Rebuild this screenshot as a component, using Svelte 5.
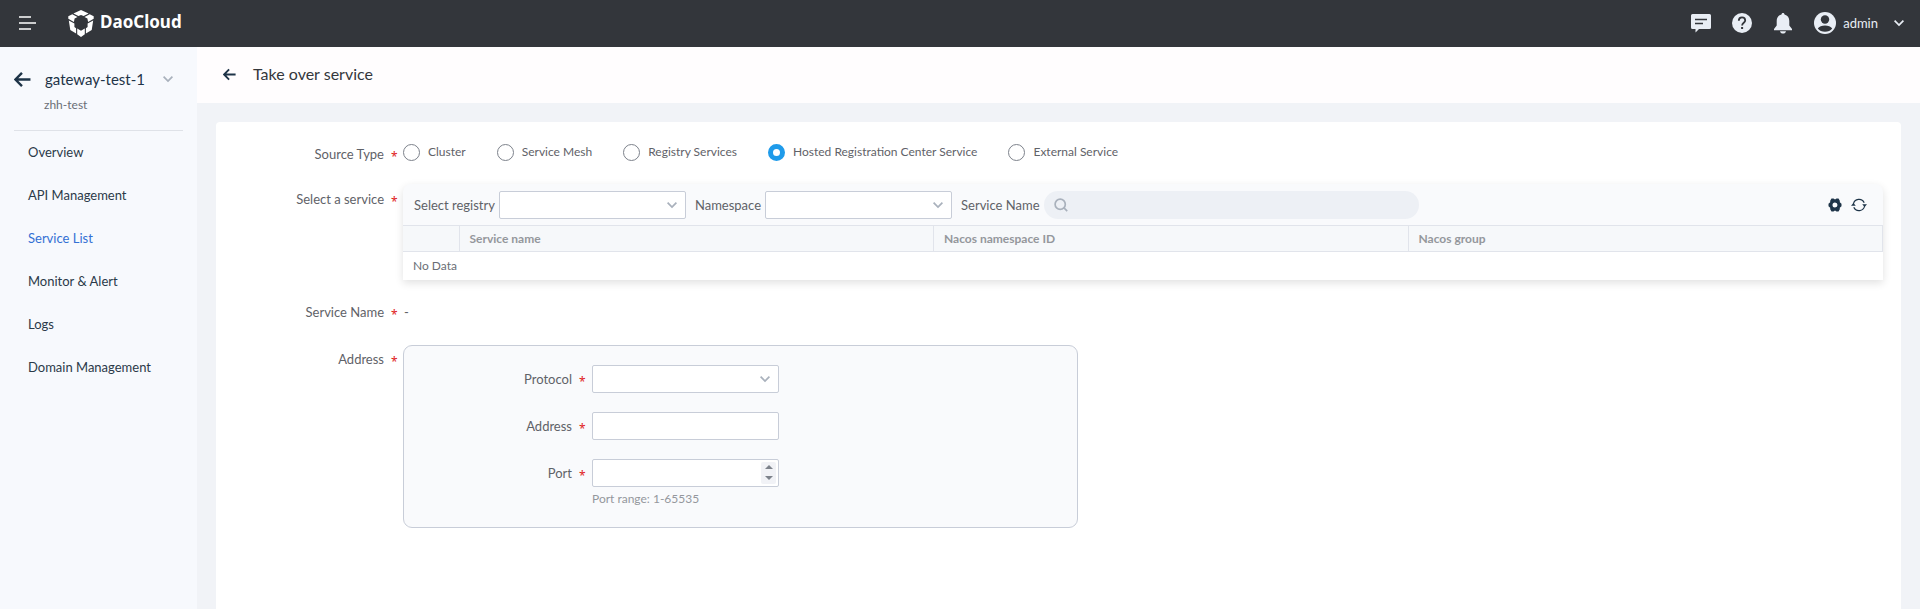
<script>
  const nav = ['Overview', 'API Management', 'Service List', 'Monitor & Alert', 'Logs', 'Domain Management'];
  const sources = ['Cluster', 'Service Mesh', 'Registry Services', 'Hosted Registration Center Service', 'External Service'];
  let source = $state('Hosted Registration Center Service');
  let port = $state(null);

  function step(by) {
    port = Math.min(65535, Math.max(1, (port ?? 0) + by));
  }
</script>

{#snippet chevron()}
  <svg class="chevron" width="10" height="10" viewBox="0 0 10 10" aria-hidden="true">
    <path d="M.6 2.600 5 7l4.400-4.400" fill="none" stroke="currentColor" stroke-width="1.700" />
  </svg>
{/snippet}

{#snippet arrow(size)}
  <svg width={size} height={size} viewBox="0 0 16 16" aria-hidden="true">
    <path d="M15.500 8H1.500M7.500 1.800 1.300 8l6.200 6.200" fill="none" stroke="currentColor" stroke-width="2.300" />
  </svg>
{/snippet}

{#snippet required()}
  <span class="star">*</span>
{/snippet}

<div class="app">
  <header class="topbar">
    <button class="plain menu" aria-label="Menu">
      <svg width="18" height="14" viewBox="0 0 18 14">
        <path d="M0 1h12M0 7h17M0 13h12" fill="none" stroke="currentColor" stroke-width="1.600" />
      </svg>
    </button>
    <a class="brand" href="#home">
      <svg width="26" height="27" viewBox="0 0 26 27" fill="currentColor" aria-hidden="true">
        <path d="M13 0 20.600 3.400 15.600 6 13 4.900 10.400 6 5.400 3.400Z" />
        <path d="M4.300 4.200 9.500 6.900 6.600 8.600 5.900 12 .3 8.800V6.300Z" />
        <path d="M21.700 4.200 16.500 6.900 19.400 8.600 20.100 12 25.700 8.800V6.300Z" />
        <path d="M.8 10.400 6.400 13.600V17L8.100 18.300V23.400L2.300 20.100Z" />
        <path d="M25.200 10.400 19.600 13.600V17L17.900 18.300V23.400L23.700 20.100Z" />
        <path d="M9.200 18.500 13 20.700 16.800 18.500V24.300L13 27 9.200 24.300Z" />
      </svg>
      <span>DaoCloud</span>
    </a>
    <div class="tools">
      <button class="plain" aria-label="Messages">
        <svg width="20" height="20" viewBox="0 0 20 20">
          <path d="M1.500 1h17A1.500 1.500 0 0 1 20 2.500v12a1.500 1.500 0 0 1-1.500 1.500H8l-3.500 3.500V16h-3A1.500 1.500 0 0 1 0 14.500v-12A1.500 1.500 0 0 1 1.500 1z" fill="currentColor" />
          <path d="M4 6.500h12M4 10.500h8" stroke="#33363b" stroke-width="1.700" />
        </svg>
      </button>
      <button class="plain" aria-label="Help">
        <svg width="20" height="20" viewBox="0 0 20 20">
          <circle cx="10" cy="10" r="10" fill="currentColor" />
          <path d="M6.800 7.800C6.800 5.600 8.200 4.400 10 4.400s3.200 1.200 3.200 3c0 2.200-3.100 2.500-3.100 5" fill="none" stroke="#33363b" stroke-width="1.800" />
          <rect x="9.100" y="14" width="2" height="2" fill="#33363b" />
        </svg>
      </button>
      <button class="plain" aria-label="Notifications">
        <svg width="20" height="21" viewBox="0 0 20 21" fill="currentColor">
          <path d="M10 0c.9 0 1.500.6 1.500 1.500 3.200.8 4.800 3.300 4.800 6.500v4.500l2.700 3.400v1.300H1v-1.300l2.700-3.400V8c0-3.200 1.600-5.700 4.800-6.500C8.500.6 9.100 0 10 0z" />
          <path d="M7 18.200h6c-.3 1.500-1.500 2.400-3 2.400s-2.700-.9-3-2.400z" />
        </svg>
      </button>
      <button class="plain user">
        <svg width="22" height="22" viewBox="0 0 22 22" aria-hidden="true">
          <circle cx="11" cy="11" r="11" fill="currentColor" />
          <circle cx="11" cy="7.500" r="4.200" fill="#33363b" />
          <path d="M3.800 16.500C5 14.300 8 13.400 11 13.400s6 .9 7.200 3.100C16.500 18.700 14 19.800 11 19.800s-5.500-1.100-7.200-3.300z" fill="#33363b" />
        </svg>
        <span>admin</span>
        {@render chevron()}
      </button>
    </div>
  </header>

  <div class="body">
    <aside>
      <div class="scope">
        <button class="plain" aria-label="Back">{@render arrow(17)}</button>
        <span class="scope-name">gateway-test-1</span>
        <button class="plain switch" aria-label="Switch gateway">{@render chevron()}</button>
      </div>
      <div class="scope-sub">zhh-test</div>
      <hr />
      <nav>
        {#each nav as item}
          <a href="#nav" class:active={item === 'Service List'}>{item}</a>
        {/each}
      </nav>
    </aside>

    <main>
      <div class="pagehead">
        <button class="plain" aria-label="Back">{@render arrow(13)}</button>
        <h1>Take over service</h1>
      </div>

      <form class="card">
        <div class="field source">
          <span class="label" id="source-type">Source Type {@render required()}</span>
          <div class="radios" role="radiogroup" aria-labelledby="source-type">
            {#each sources as s}
              <label><input type="radio" name="source" value={s} bind:group={source} />{s}</label>
            {/each}
          </div>
        </div>

        <div class="field service">
          <span class="label">Select a service {@render required()}</span>
          <div class="panel">
            <div class="toolbar">
              <label for="registry">Select registry</label>
              <div class="select"><select id="registry"></select>{@render chevron()}</div>
              <label for="namespace">Namespace</label>
              <div class="select"><select id="namespace"></select>{@render chevron()}</div>
              <label for="search">Service Name</label>
              <div class="search">
                <svg width="14" height="14" viewBox="0 0 14 14" aria-hidden="true">
                  <path d="M10.200 10.200 13.200 13.200M11.300 6.200a5.100 5.100 0 1 1-10.200 0 5.100 5.100 0 0 1 10.200 0z" fill="none" stroke="#a9b1bc" stroke-width="1.700" />
                </svg>
                <input id="search" type="text" />
              </div>
              <div class="actions">
                <button type="button" class="plain" aria-label="Columns">
                  <svg width="14" height="14" viewBox="0 0 14 14">
                    <path fill="#1e3448" fill-rule="evenodd" d="M3.500.6h2L7 1.500 8.500.6h2l1.300 2.200v1.500l1.700 1.400v2.600l-1.700 1.400v1.500l-1.300 2.200h-2L7 12.500l-1.500.9h-2L2.200 11.200V9.700L.5 8.300V5.700l1.700-1.400V2.800zM7 4.500a2.500 2.500 0 1 0 0 5 2.500 2.500 0 0 0 0-5z" />
                  </svg>
                </button>
                <button type="button" class="plain" aria-label="Refresh">
                  <svg width="16" height="14" viewBox="0 0 16 14">
                    <path d="M2.400 6A5.700 5.700 0 0 1 13.200 4.800M13.600 8A5.700 5.700 0 0 1 2.800 9.200" fill="none" stroke="#1e3448" stroke-width="1.200" />
                    <path d="M0 7.800 2.400 5l2.400 2.800zM11.200 6.200h4.800L13.600 9z" fill="#1e3448" />
                  </svg>
                </button>
              </div>
            </div>
            <table>
              <thead>
                <tr><th class="pick"></th><th>Service name</th><th>Nacos namespace ID</th><th>Nacos group</th></tr>
              </thead>
              <tbody>
                <tr><td colspan="4">No Data</td></tr>
              </tbody>
            </table>
          </div>
        </div>

        <div class="field name">
          <span class="label">Service Name {@render required()}</span>
          <span class="value">-</span>
        </div>

        <div class="field address">
          <span class="label">Address {@render required()}</span>
          <div class="group">
            <div class="row">
              <label class="label" for="protocol">Protocol {@render required()}</label>
              <div class="select"><select id="protocol"></select>{@render chevron()}</div>
            </div>
            <div class="row">
              <label class="label" for="address">Address {@render required()}</label>
              <div class="box"><input id="address" type="text" /></div>
            </div>
            <div class="row">
              <label class="label" for="port">Port {@render required()}</label>
              <div class="box">
                <input id="port" type="number" min="1" max="65535" bind:value={port} />
                <div class="spin">
                  <button type="button" class="plain" aria-label="Increase" onclick={() => step(1)}>
                    <svg width="8" height="4" viewBox="0 0 8 4"><path d="M0 4 4 0l4 4z" fill="currentColor" /></svg>
                  </button>
                  <button type="button" class="plain" aria-label="Decrease" onclick={() => step(-1)}>
                    <svg width="8" height="4" viewBox="0 0 8 4"><path d="M0 0h8L4 4z" fill="currentColor" /></svg>
                  </button>
                </div>
              </div>
            </div>
            <p class="hint">Port range: 1-65535</p>
          </div>
        </div>
      </form>
    </main>
  </div>
</div>

<style>
  :global(body) {
    margin: 0;
  }
  .app {
    display: flex;
    flex-direction: column;
    min-height: 100vh;
    font-family: Lato, 'Open Sans', sans-serif;
    font-size: 13px;
    line-height: 20px;
    color: #5f6268;
  }
  .app * {
    box-sizing: border-box;
  }
  svg {
    display: block;
    flex: none;
  }
  input,
  select,
  button {
    font: inherit;
    color: inherit;
    min-width: 0;
    margin: 0;
  }
  .plain {
    display: flex;
    align-items: center;
    justify-content: center;
    padding: 0;
    border: 0;
    background: none;
    cursor: pointer;
  }

  .topbar {
    display: flex;
    align-items: center;
    height: 47px;
    padding: 0 16px 1px 19px;
    background: #33363b;
    color: #fff;
  }
  .brand {
    display: flex;
    align-items: center;
    gap: 6px;
    margin-left: 31px;
    color: #fff;
    font: bold 17px/24px 'Noto Sans', sans-serif;
    text-decoration: none;
  }
  .brand span {
    padding-bottom: 2px;
  }
  .tools {
    display: flex;
    align-items: center;
    gap: 21px;
    margin-left: auto;
    color: #e9eef5;
  }
  .user span {
    margin: 0 16px 0 7px;
  }

  .body {
    display: flex;
    flex: 1;
  }
  aside {
    width: 197px;
    flex: none;
    padding: 20px 14px;
    background: #f7f9fd;
    color: #2b3a49;
  }
  .scope {
    display: flex;
    align-items: center;
    height: 24px;
    gap: 14px;
    color: #1e3448;
  }
  .scope-name {
    font-size: 15px;
  }
  .switch {
    margin: 0 10px 0 auto;
    color: #a9b1bc;
  }
  .scope-sub {
    margin: 4px 0 15px 30px;
    font-size: 12px;
    color: #6a6e76;
  }
  hr {
    margin: 0;
    border: 0;
    border-top: 1px solid #dfe2e8;
  }
  nav {
    display: flex;
    flex-direction: column;
    gap: 23px;
    padding: 11px 14px;
  }
  nav a {
    color: inherit;
    text-decoration: none;
    white-space: nowrap;
  }
  nav a.active {
    color: #3370d4;
  }

  main {
    display: flex;
    flex-direction: column;
    flex: 1;
    min-width: 0;
    background: #f1f3f7;
  }
  .pagehead {
    display: flex;
    align-items: center;
    gap: 17px;
    height: 56px;
    padding: 0 26px 2px;
    background: #fffdfe;
    color: #1e3448;
  }
  h1 {
    margin: 0;
    font-size: 16px;
    font-weight: 400;
    color: #34373c;
  }
  .card {
    flex: 1;
    margin: 19px 19px 0;
    padding: 20px 18px 24px 0;
    border-radius: 4px 4px 0 0;
    background: #fff;
  }
  .field {
    display: grid;
    grid-template-columns: 181px minmax(0, 1fr);
    column-gap: 6px;
    align-items: start;
  }
  .label {
    display: flex;
    align-items: center;
    justify-content: flex-end;
    gap: 7px;
  }
  .star {
    width: 6px;
    height: 12px;
    color: #e02020;
    font-family: 'Noto Sans', sans-serif;
    font-size: 12px;
    line-height: 18px;
    text-align: center;
  }
  .source .label {
    padding-top: 2px;
  }
  .radios {
    display: flex;
    flex-wrap: wrap;
    gap: 31px;
    font-size: 12px;
  }
  .radios label {
    display: flex;
    align-items: center;
    gap: 8px;
  }
  .radios input {
    appearance: none;
    width: 17px;
    height: 17px;
    border: 1px solid #7d828b;
    border-radius: 50%;
    background: #fff;
  }
  .radios input:checked {
    border: 5px solid #1f9bea;
  }

  .service {
    margin-top: 20px;
  }
  .service .label {
    padding-top: 5px;
  }
  .panel {
    border-radius: 8px 8px 0 0;
    background: #f9fafc;
    box-shadow: 0 3px 8px rgba(0, 0, 0, 0.12);
  }
  .toolbar {
    display: flex;
    align-items: center;
    height: 41px;
    padding: 0 16px 0 11px;
  }
  .toolbar label {
    margin-right: 4px;
    white-space: nowrap;
  }
  .toolbar .select {
    margin-right: 9px;
  }
  .select {
    display: grid;
    align-items: center;
    width: 187px;
  }
  .select > select,
  .select > :global(svg) {
    grid-area: 1 / 1;
  }
  .select > :global(svg) {
    justify-self: end;
    margin-right: 9px;
    color: #a9b1bc;
    pointer-events: none;
  }
  select,
  .box {
    width: 100%;
    height: 28px;
    border: 1px solid #c8cdd8;
    border-radius: 2px;
    background: #fff;
  }
  select {
    appearance: none;
    padding: 0 26px 0 8px;
  }
  .search {
    display: flex;
    align-items: center;
    gap: 8px;
    flex: 0 1 375px;
    height: 28px;
    padding: 0 12px 0 10px;
    border-radius: 14px;
    background: #edf0f5;
  }
  .search input,
  .box input {
    flex: 1;
    border: 0;
    padding: 0;
    background: none;
    outline: none;
  }
  .actions {
    display: flex;
    gap: 9px;
    margin-left: auto;
  }
  table {
    width: 100%;
    table-layout: fixed;
    border-collapse: collapse;
  }
  th {
    height: 26px;
    padding: 0 10px;
    border: 1px solid #e1e4eb;
    background: #f6f8fa;
    color: #94979c;
    font-size: 12px;
    font-weight: 700;
    line-height: 20px;
    text-align: left;
  }
  th:first-child {
    border-left: 0;
  }
  .pick {
    width: 56px;
  }
  td {
    height: 28px;
    padding: 0 10px;
    background: #fff;
    font-size: 12px;
    color: #6a6e76;
  }
  .name {
    margin-top: 22px;
  }
  .value {
    padding-left: 1px;
  }
  .address {
    margin-top: 23px;
  }
  .address > .label {
    padding-top: 4px;
  }
  .group {
    display: flex;
    flex-direction: column;
    gap: 19px;
    max-width: 675px;
    padding: 19px 16px 18px 0;
    border: 1px solid #c8cdd8;
    border-radius: 9px;
    background: #f9fafc;
  }
  .row {
    display: grid;
    grid-template-columns: 181px 187px;
    column-gap: 7px;
    align-items: center;
  }
  .box {
    display: flex;
    align-items: center;
    padding: 2px 2px 2px 8px;
  }
  .box input {
    appearance: textfield;
  }
  .spin {
    display: flex;
    flex-direction: column;
    width: 15px;
    height: 22px;
    border-radius: 2px;
    background: #f1f2f6;
    color: #7d828b;
  }
  .spin button {
    flex: 1;
    color: inherit;
  }
  .hint {
    margin: -17px 0 0 188px;
    color: #94979c;
    font-size: 12px;
  }
</style>
